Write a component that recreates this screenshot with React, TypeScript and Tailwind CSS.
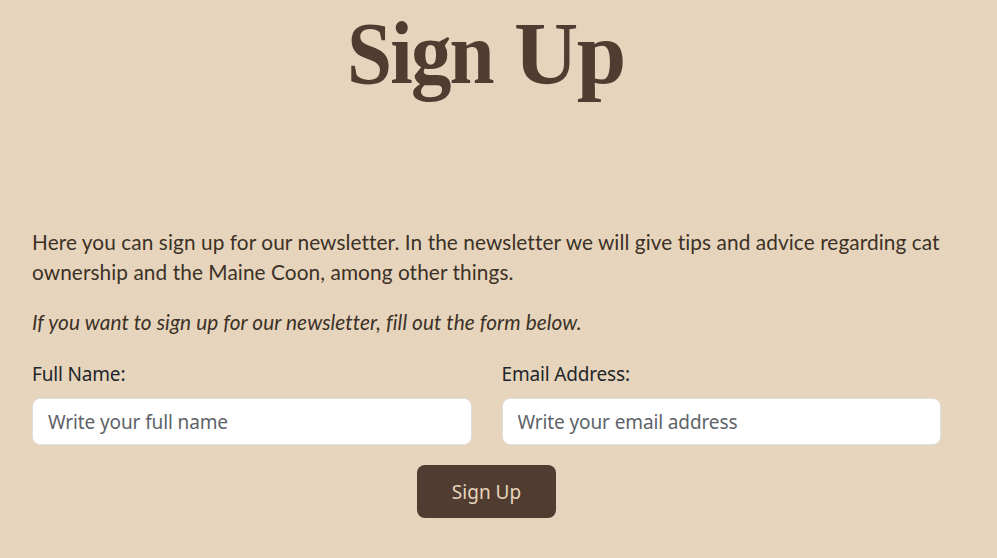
type FieldProps = { id: string; label: string; type: string; placeholder: string };

function Field({ id, label, type, placeholder }: FieldProps) {
  return (
    <div className="flex flex-col">
      <label htmlFor={id} className="h-[30px] self-start text-[19px] leading-[30px] tracking-[-0.17px] whitespace-nowrap text-[#212529]">
        {label}
      </label>
      <input
        id={id}
        type={type}
        placeholder={placeholder}
        className="mt-[9px] h-[47px] w-full rounded-lg border border-[#e0dfdc] bg-white px-[15px] text-[19px] tracking-[-0.12px] outline-none placeholder:text-[#5d6369]"
      />
    </div>
  );
}

export default function App() {
  return (
    <main className="h-[558px] w-full overflow-hidden bg-[#e6d5bc] pr-14 pl-8 font-['Noto_Sans',sans-serif]">
      <h1 className="flex h-[227px] pt-[3px] pl-[315px] font-['Liberation_Serif',serif] text-[89px] leading-[100px] font-bold whitespace-nowrap text-[#513c31]">
        <span className="w-[167px] origin-left scale-x-[0.91] tracking-[-2px]">Sign </span>
        <span className="tracking-[-1.5px]">Up</span>
      </h1>
      <div className="font-['Lato',sans-serif] text-[20.8px] leading-[30px] tracking-[0.08px] whitespace-nowrap text-[#3c3127]">
        <p>
          Here you can sign up for our newsletter. In the newsletter we will give tips and advice regarding cat
          <br />
          ownership and the Maine Coon, among other things.
        </p>
        <p className="mt-5 italic">If you want to sign up for our newsletter, fill out the form below.</p>
      </div>
      <form className="mt-[22px]" onSubmit={(e) => e.preventDefault()}>
        <div className="grid grid-cols-2 gap-[30px]">
          <Field id="name" label="Full Name:" type="text" placeholder="Write your full name" />
          <Field id="email" label="Email Address:" type="email" placeholder="Write your email address" />
        </div>
        <div className="mt-5 flex justify-center">
          <button type="submit" className="h-[53px] w-[139px] rounded-lg bg-[#513c31] pt-0.5 text-[19px] text-[#e6d5bc]">
            Sign Up
          </button>
        </div>
      </form>
    </main>
  );
}
